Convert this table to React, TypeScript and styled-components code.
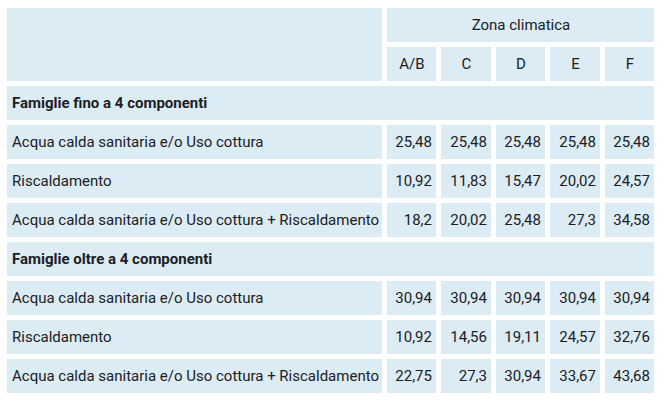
import React from 'react';
import styled, { createGlobalStyle } from 'styled-components';

const GlobalStyle = createGlobalStyle`
    html, body {
        margin: 0;
        padding: 0;
        background: #ffffff;
    }
`;

const Wrapper = styled.div`
    padding: 3px 2px;
    font-family: Roboto, "Liberation Sans", sans-serif;
    color: #1c2024;
`;

const Table = styled.table`
    border-collapse: separate;
    border-spacing: 5px;
    table-layout: fixed;
    width: 657px;
    font-size: 15px;
`;

const Col = styled.col<{ $w: number }>`
    width: ${p => p.$w}px;
`;

const Cell = styled.td<{ $align?: 'left' | 'center' | 'right'; $bold?: boolean }>`
    background: #dbecf4;
    height: 34px;
    padding: 0 4px 0 5px;
    box-sizing: border-box;
    text-align: ${p => p.$align || 'left'};
    font-weight: ${p => (p.$bold ? 700 : 400)};
    white-space: nowrap;
    vertical-align: middle;
    line-height: 1;
`;

type Row = { label: string; values: string[] };
type Group = { title: string; rows: Row[] };

const zones = ['A/B', 'C', 'D', 'E', 'F'];
const widths = [375, 49, 50, 49, 50, 49];

const groups: Group[] = [
    {
        title: 'Famiglie fino a 4 componenti',
        rows: [
            { label: 'Acqua calda sanitaria e/o Uso cottura', values: ['25,48', '25,48', '25,48', '25,48', '25,48'] },
            { label: 'Riscaldamento', values: ['10,92', '11,83', '15,47', '20,02', '24,57'] },
            { label: 'Acqua calda sanitaria e/o Uso cottura + Riscaldamento', values: ['18,2', '20,02', '25,48', '27,3', '34,58'] }
        ]
    },
    {
        title: 'Famiglie oltre a 4 componenti',
        rows: [
            { label: 'Acqua calda sanitaria e/o Uso cottura', values: ['30,94', '30,94', '30,94', '30,94', '30,94'] },
            { label: 'Riscaldamento', values: ['10,92', '14,56', '19,11', '24,57', '32,76'] },
            { label: 'Acqua calda sanitaria e/o Uso cottura + Riscaldamento', values: ['22,75', '27,3', '30,94', '33,67', '43,68'] }
        ]
    }
];

export default function App() {
    return (
        <Wrapper>
            <GlobalStyle />
            <Table>
                <colgroup>
                    {widths.map((w, i) => (
                        <Col key={i} $w={w} />
                    ))}
                </colgroup>
                <thead>
                    <tr>
                        <Cell rowSpan={2} />
                        <Cell colSpan={5} $align="center">Zona climatica</Cell>
                    </tr>
                    <tr>
                        {zones.map(z => (
                            <Cell key={z} $align="center">{z}</Cell>
                        ))}
                    </tr>
                </thead>
                <tbody>
                    {groups.map(g => (
                        <React.Fragment key={g.title}>
                            <tr>
                                <Cell colSpan={6} $bold>{g.title}</Cell>
                            </tr>
                            {g.rows.map(r => (
                                <tr key={r.label}>
                                    <Cell>{r.label}</Cell>
                                    {r.values.map((v, i) => (
                                        <Cell key={i} $align="right">{v}</Cell>
                                    ))}
                                </tr>
                            ))}
                        </React.Fragment>
                    ))}
                </tbody>
            </Table>
        </Wrapper>
    );
}
